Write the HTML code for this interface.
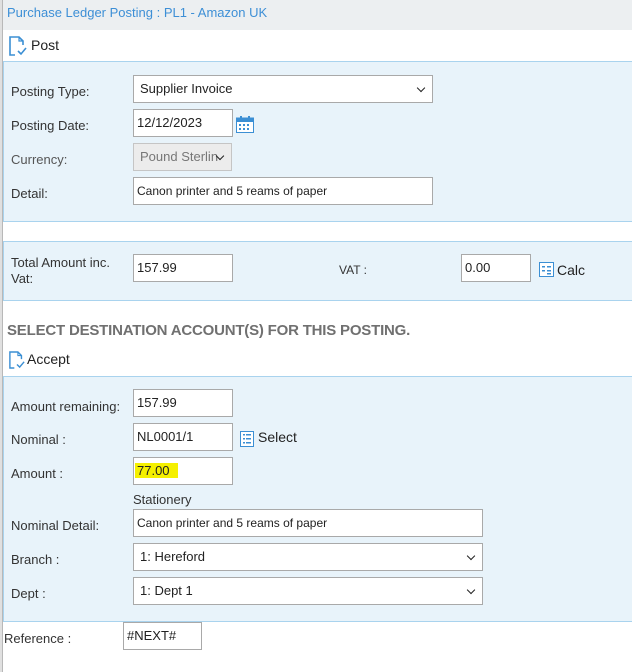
<!DOCTYPE html>
<html><head><style>
*{box-sizing:border-box;margin:0;padding:0}
body{width:632px;height:672px;overflow:hidden;background:#fff;font-family:"Liberation Sans",Arial,sans-serif;font-size:13px;color:#333;position:relative}
.a{position:absolute}
.lbl{position:absolute;color:#333;font-size:13px}
.inp{position:absolute;background:#fff;border:1px solid #a9a9a9;height:28px;padding:0 3px;line-height:26px;font-size:13px;color:#222}
.sel{position:absolute;background:#fff;border:1px solid #a9a9a9;height:28px;padding:0 6px;line-height:26px;font-size:13px;color:#222}
.sel:after{content:"";position:absolute;right:8px;top:9px;width:5px;height:5px;border-right:1.5px solid #222;border-bottom:1.5px solid #222;transform:rotate(45deg)}
.panel{position:absolute;left:3px;right:0;background:#e8f3fa;border-top:1px solid #a9d3ee;border-bottom:1px solid #a9d3ee;border-left:1px solid #a9d3ee}
</style></head><body>
<div class="a" style="left:0;top:0;width:3px;height:672px;background:#e0e0e0"></div>
<div class="a" style="left:2px;top:0;width:1px;height:672px;background:#b8b8b8"></div>
<div class="a" style="left:3px;top:0;right:0;height:30px;background:#eceff1"></div>
<div class="a" style="left:7px;top:5px;color:#3d8fd6;font-size:13px">Purchase Ledger Posting : PL1 - Amazon UK</div>
<svg class="a" style="left:9px;top:36px" width="18" height="20" viewBox="0 0 18 20"><path d="M6 1H1v18h5M6 1h4l4 4v4" fill="none" stroke="#3b8fd4" stroke-width="1.6"/><path d="M10 1v4h4" fill="none" stroke="#3b8fd4" stroke-width="1.2"/><path d="M9 15l3 3 5-6" fill="none" stroke="#3b8fd4" stroke-width="1.6"/></svg>
<div class="a" style="left:31px;top:37px;font-size:14px;color:#222">Post</div>
<div class="panel" style="top:61px;height:161px"></div>
<div class="lbl" style="left:11px;top:84px">Posting Type:</div>
<div class="sel" style="left:133px;top:75px;width:300px">Supplier Invoice</div>
<div class="lbl" style="left:11px;top:118px">Posting Date:</div>
<div class="inp" style="left:133px;top:109px;width:100px">12/12/2023</div>
<svg class="a" style="left:236px;top:116px" width="18" height="17" viewBox="0 0 18 17"><rect x="0.5" y="2" width="17" height="14.5" fill="#fff" stroke="#3b8fd4"/><rect x="0.5" y="2" width="17" height="4" fill="#3b8fd4"/><rect x="4" y="0" width="2" height="3" fill="#3b8fd4"/><rect x="12" y="0" width="2" height="3" fill="#3b8fd4"/><g fill="#3b8fd4"><rect x="3" y="8" width="2" height="2"/><rect x="7" y="8" width="2" height="2"/><rect x="11" y="8" width="2" height="2"/><rect x="3" y="12" width="2" height="2"/><rect x="7" y="12" width="2" height="2"/><rect x="11" y="12" width="2" height="2"/></g></svg>
<div class="lbl" style="left:11px;top:152px;color:#555">Currency:</div>
<div class="sel" style="left:133px;top:143px;width:99px;background:#ececec;color:#777;border-color:#c5c5c5">Pound Sterlin</div>
<div class="lbl" style="left:11px;top:186px">Detail:</div>
<div class="inp" style="left:133px;top:177px;width:300px;font-size:12px">Canon printer and 5 reams of paper</div>
<div class="panel" style="top:241px;height:60px"></div>
<div class="lbl" style="left:11px;top:255px;line-height:16px">Total Amount inc.<br>Vat:</div>
<div class="inp" style="left:133px;top:254px;width:100px">157.99</div>
<div class="lbl" style="left:339px;top:263px;font-size:12px">VAT :</div>
<div class="inp" style="left:461px;top:254px;width:70px">0.00</div>
<svg class="a" style="left:539px;top:262px" width="15" height="15" viewBox="0 0 15 15"><rect x="0.5" y="0.5" width="14" height="14" fill="#fff" stroke="#3b8fd4"/><g fill="#3b8fd4"><rect x="3" y="4" width="3" height="1.5"/><rect x="8" y="4" width="4" height="1.5"/><rect x="3" y="8" width="3" height="1.5"/><rect x="8" y="8" width="4" height="1.5"/><rect x="8" y="11" width="4" height="1.5"/></g></svg>
<div class="a" style="left:557px;top:262px;font-size:14px;color:#222">Calc</div>
<div class="a" style="left:7px;top:322px;font-size:15px;color:#707070;font-weight:bold;letter-spacing:-0.2px">SELECT DESTINATION ACCOUNT(S) FOR THIS POSTING.</div>
<svg class="a" style="left:9px;top:350px" width="16" height="20" viewBox="0 0 18 20"><path d="M6 1H1v18h5M6 1h4l4 4v4" fill="none" stroke="#3b8fd4" stroke-width="1.6"/><path d="M10 1v4h4" fill="none" stroke="#3b8fd4" stroke-width="1.2"/><path d="M9 15l3 3 5-6" fill="none" stroke="#3b8fd4" stroke-width="1.6"/></svg>
<div class="a" style="left:27px;top:351px;font-size:14px;color:#222">Accept</div>
<div class="panel" style="top:376px;height:246px"></div>
<div class="lbl" style="left:11px;top:399px">Amount remaining:</div>
<div class="inp" style="left:133px;top:389px;width:100px;line-height:26px">157.99</div>
<div class="lbl" style="left:11px;top:432px">Nominal :</div>
<div class="inp" style="left:133px;top:423px;width:100px;line-height:26px">NL0001/1</div>
<svg class="a" style="left:240px;top:431px" width="14" height="16" viewBox="0 0 14 16"><rect x="0.5" y="0.5" width="13" height="15" fill="#fff" stroke="#3b8fd4"/><g fill="#3b8fd4"><rect x="3" y="3" width="2" height="1.5"/><rect x="6" y="3" width="5" height="1.5"/><rect x="3" y="7" width="2" height="1.5"/><rect x="6" y="7" width="5" height="1.5"/><rect x="3" y="11" width="2" height="1.5"/><rect x="6" y="11" width="5" height="1.5"/></g></svg>
<div class="a" style="left:258px;top:429px;font-size:14px;color:#222">Select</div>
<div class="lbl" style="left:11px;top:466px">Amount :</div>
<div class="inp" style="left:133px;top:457px;width:100px;line-height:26px"><span style="background:#f5f000;padding:0 8px 0 2px;margin-left:-2px">77.00</span></div>
<div class="lbl" style="left:133px;top:492px">Stationery</div>
<div class="lbl" style="left:11px;top:518px">Nominal Detail:</div>
<div class="inp" style="left:133px;top:509px;width:350px;font-size:12px">Canon printer and 5 reams of paper</div>
<div class="lbl" style="left:11px;top:552px">Branch :</div>
<div class="sel" style="left:133px;top:543px;width:350px">1: Hereford</div>
<div class="lbl" style="left:11px;top:586px">Dept :</div>
<div class="sel" style="left:133px;top:577px;width:350px">1: Dept 1</div>
<div class="lbl" style="left:4px;top:631px">Reference :</div>
<div class="inp" style="left:123px;top:622px;width:79px;height:28px;line-height:26px">#NEXT#</div>
</body></html>
